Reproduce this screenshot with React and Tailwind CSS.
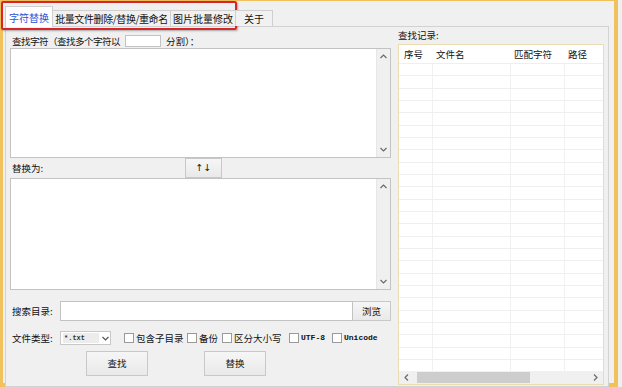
import React from "react";

const cjk = "font-['Noto_Sans_CJK_SC','Noto_Sans',sans-serif]";

function VScroll() {
  return (
    <div className="w-[14px] h-full bg-[#f0f0f0] border-l border-[#e6e6e6] flex flex-col items-center justify-between py-[5px]">
      <svg width="7" height="5" viewBox="0 0 7 5">
        <path d="M0.5 4 L3.5 1 L6.5 4" fill="none" stroke="#6b6b6b" strokeWidth="1.2" />
      </svg>
      <svg width="7" height="5" viewBox="0 0 7 5">
        <path d="M0.5 1 L3.5 4 L6.5 1" fill="none" stroke="#6b6b6b" strokeWidth="1.2" />
      </svg>
    </div>
  );
}

function TextBox({ h }) {
  return (
    <div className={`flex w-full ${h} bg-white border border-[#c3c3c3]`}>
      <div className="flex-1" />
      <VScroll />
    </div>
  );
}

function Check({ label, w, mono }) {
  return (
    <div className={`flex items-center ${w} shrink-0 whitespace-nowrap`}>
      <div className="w-[10px] h-[10px] bg-white border border-[#9a9a9a] shrink-0" />
      <span
        className={
          mono
            ? "ml-[2px] text-[8px] font-bold font-['Liberation_Mono',monospace] text-[#111]"
            : "ml-[2px] text-[9.5px] text-[#111]"
        }
      >
        {label}
      </span>
    </div>
  );
}

function Btn({ children, className }) {
  return (
    <div
      className={`flex items-center justify-center bg-gradient-to-b from-[#f6f6f6] to-[#e9e9e9] border border-[#c8c8c8] text-[9.5px] text-[#111] ${className}`}
    >
      {children}
    </div>
  );
}

export default function App() {
  const rows = Array.from({ length: 25 });

  return (
    <div className={`relative flex w-[622px] h-[387px] bg-[#eef0f0] overflow-hidden whitespace-nowrap ${cjk}`}>
      <div className="flex flex-col w-[618px] h-full border-l-[3px] border-t border-r-[4px] border-b-[4px] border-[#f1c15d] bg-[#f0f0f0] pl-[2px] pr-[5px]">
        {/* tabs */}
        <div className="flex items-end h-[25px] shrink-0 relative z-10">
          <div className="flex items-center justify-center w-[48px] h-[21px] -mb-px bg-white border border-b-0 border-[#cfcfcf] text-[10px] text-[#2d4fd6]">
            字符替换
          </div>
          <div className="flex items-center justify-center w-[118px] h-[16px] bg-[#f1f1f1] border border-l-0 border-b-0 border-[#cfcfcf] text-[10px] tracking-[-0.4px] text-[#111]">
            批量文件删除/替换/重命名
          </div>
          <div className="flex items-center justify-center w-[65px] h-[16px] bg-[#f1f1f1] border border-l-0 border-b-0 border-[#cfcfcf] text-[10px] text-[#111]">
            图片批量修改
          </div>
          <div className="flex items-center justify-center w-[37px] h-[16px] bg-[#f1f1f1] border border-l-0 border-b-0 border-[#cfcfcf] text-[10px] text-[#111]">
            关于
          </div>
        </div>

        {/* panel */}
        <div className="flex flex-1 border border-[#d2d2d2] bg-[#f0f0f0]">
          {/* left */}
          <div className="flex flex-col w-[381px] ml-[4px] pt-[7px]">
            <div className="flex items-center h-[14px] pl-[2px] text-[9.5px] text-[#111]">
              <span className="w-[113px] tracking-[-0.5px]">查找字符（查找多个字符以</span>
              <div className="w-[36px] h-[12px] bg-white border border-[#c3c3c3]" />
              <span className="ml-[5px]">分割）：</span>
            </div>
            <TextBox h="h-[110px]" />
            <div className="flex items-center h-[20px]">
              <span className="w-[175px] pl-[2px] text-[9.5px] text-[#111]">替换为:</span>
              <Btn className="w-[37px] h-[20px] font-['DejaVu_Sans',sans-serif] text-[8px]">↑↓</Btn>
            </div>
            <TextBox h="h-[112px]" />
            <div className="flex items-center h-[20px] mt-[11px]">
              <span className="w-[50px] pl-[2px] text-[9.5px] text-[#111]">搜索目录:</span>
              <div className="w-[293px] h-full bg-white border border-[#c3c3c3]" />
              <Btn className="w-[38px] h-full border-l-0">浏览</Btn>
            </div>
            <div className="flex items-center h-[14px] mt-[10px]">
              <span className="w-[50px] pl-[2px] text-[9.5px] text-[#111]">文件类型:</span>
              <div className="flex items-center w-[51px] h-[14px] bg-white border border-[#c8c8c8]">
                <span className="ml-[2px] px-[1px] bg-[#ececec] text-[7px] font-bold text-[#333] font-['Liberation_Mono',monospace] w-[36px]">
                  *.txt
                </span>
                <svg className="ml-[3px]" width="7" height="5" viewBox="0 0 7 5">
                  <path d="M0.5 1 L3.5 4 L6.5 1" fill="none" stroke="#555" strokeWidth="1.2" />
                </svg>
              </div>
              <div className="w-[13px]" />
              <Check label="包含子目录" w="w-[63px]" />
              <Check label="备份" w="w-[35px]" />
              <Check label="区分大小写" w="w-[67px]" />
              <Check label="UTF-8" w="w-[43px]" mono />
              <Check label="Unicode" w="w-[44px]" mono />
            </div>
            <div className="flex h-[25px] mt-[6px]">
              <Btn className="w-[62px] h-full ml-[76px]">查找</Btn>
              <Btn className="w-[62px] h-full ml-[56px]">替换</Btn>
            </div>
          </div>

          {/* right */}
          <div className="flex flex-col w-[206px] ml-[7px] pt-[1px]">
            <div className="h-[14px] flex items-center text-[9.5px] text-[#111]">查找记录:</div>
            <div className="flex flex-col flex-1 mt-[2px] mb-[1px] bg-white border border-[#ecdcb3] overflow-hidden">
              <div className="flex h-[18px] shrink-0 items-center text-[9.5px] text-[#111]">
                <span className="w-[34px] pl-[5px]">序号</span>
                <span className="w-[78px] pl-[3px]">文件名</span>
                <span className="w-[54px] pl-[3px]">匹配字符</span>
                <span className="w-[38px] pl-[3px]">路径</span>
              </div>
              <div className="flex-1 overflow-hidden">
                {rows.map((_, i) => (
                  <div key={i} className="flex h-[12.33px] border-t border-[#efefef]">
                    <div className="w-[34px] border-r border-[#f1f1f1]" />
                    <div className="w-[78px] border-r border-[#f1f1f1]" />
                    <div className="w-[54px] border-r border-[#f1f1f1]" />
                    <div className="w-[38px]" />
                  </div>
                ))}
              </div>
              <div className="flex items-center h-[13px] shrink-0 bg-[#f0f0f0]">
                <svg className="ml-[5px]" width="5" height="7" viewBox="0 0 5 7">
                  <path d="M4 0.5 L1 3.5 L4 6.5" fill="none" stroke="#6b6b6b" strokeWidth="1.2" />
                </svg>
                <div className="ml-[8px] w-[113px] h-[11px] bg-[#cdcdcd]" />
                <div className="flex-1" />
                <svg className="mr-[5px]" width="5" height="7" viewBox="0 0 5 7">
                  <path d="M1 0.5 L4 3.5 L1 6.5" fill="none" stroke="#6b6b6b" strokeWidth="1.2" />
                </svg>
              </div>
            </div>
          </div>
        </div>
      </div>

      {/* red highlight box */}
      <div className="absolute left-[1px] top-[1px] w-[236px] h-[29px] border-2 border-[#d6262a] rounded-[2px] shadow-[1px_1px_2px_rgba(0,0,0,0.3)] pointer-events-none" />
    </div>
  );
}
